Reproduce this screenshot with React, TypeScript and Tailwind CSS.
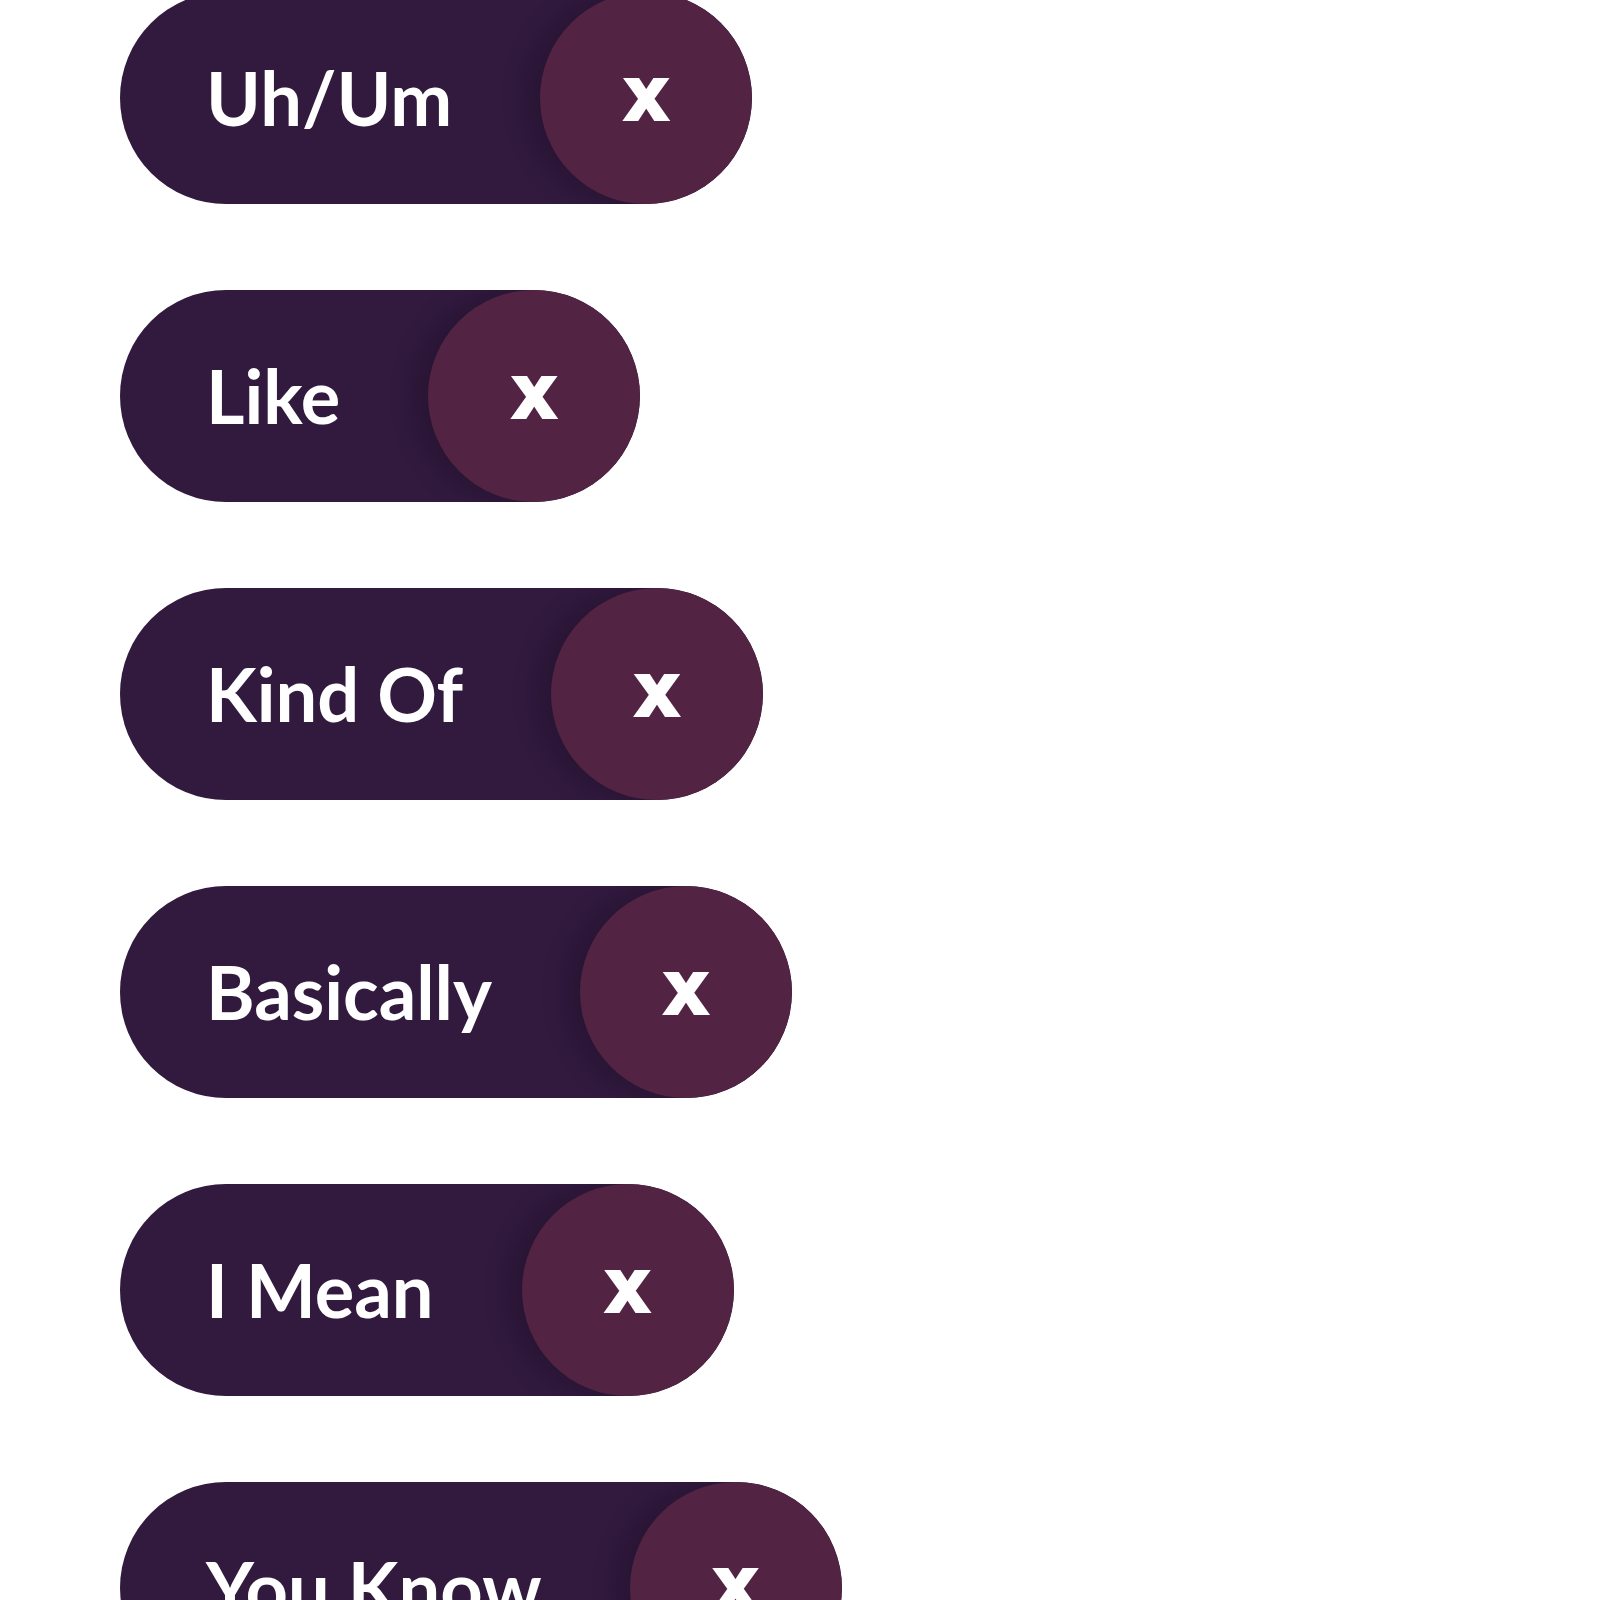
const fillers = ['Uh/Um', 'Like', 'Kind Of', 'Basically', 'I Mean', 'You Know']

function FillerPill({ label }: { label: string }) {
  return (
    <div className="flex h-[212px] items-center self-start overflow-hidden rounded-full bg-[#311a3e]">
      <span className="pl-[86px] pr-[88px] text-[74px] font-bold leading-none whitespace-nowrap text-white">
        {label}
      </span>
      <button
        className="flex h-[212px] w-[212px] shrink-0 items-center justify-center rounded-full bg-[#532343] text-[74px] font-bold leading-none text-white shadow-[-12px_0_26px_rgba(20,5,25,0.3)] [-webkit-text-stroke:4px_white]"
        style={{ fontFamily: '"Liberation Sans", Arial, sans-serif' }}
      >
        <span className="-mt-[8px]">x</span>
      </button>
    </div>
  )
}

export default function App() {
  return (
    <div className="min-h-screen bg-white" style={{ fontFamily: 'Lato, "Noto Sans", sans-serif' }}>
      <div className="-mt-[8px] flex flex-col gap-[86px] pl-[120px]">
        {fillers.map((f) => (
          <FillerPill key={f} label={f} />
        ))}
      </div>
    </div>
  )
}
